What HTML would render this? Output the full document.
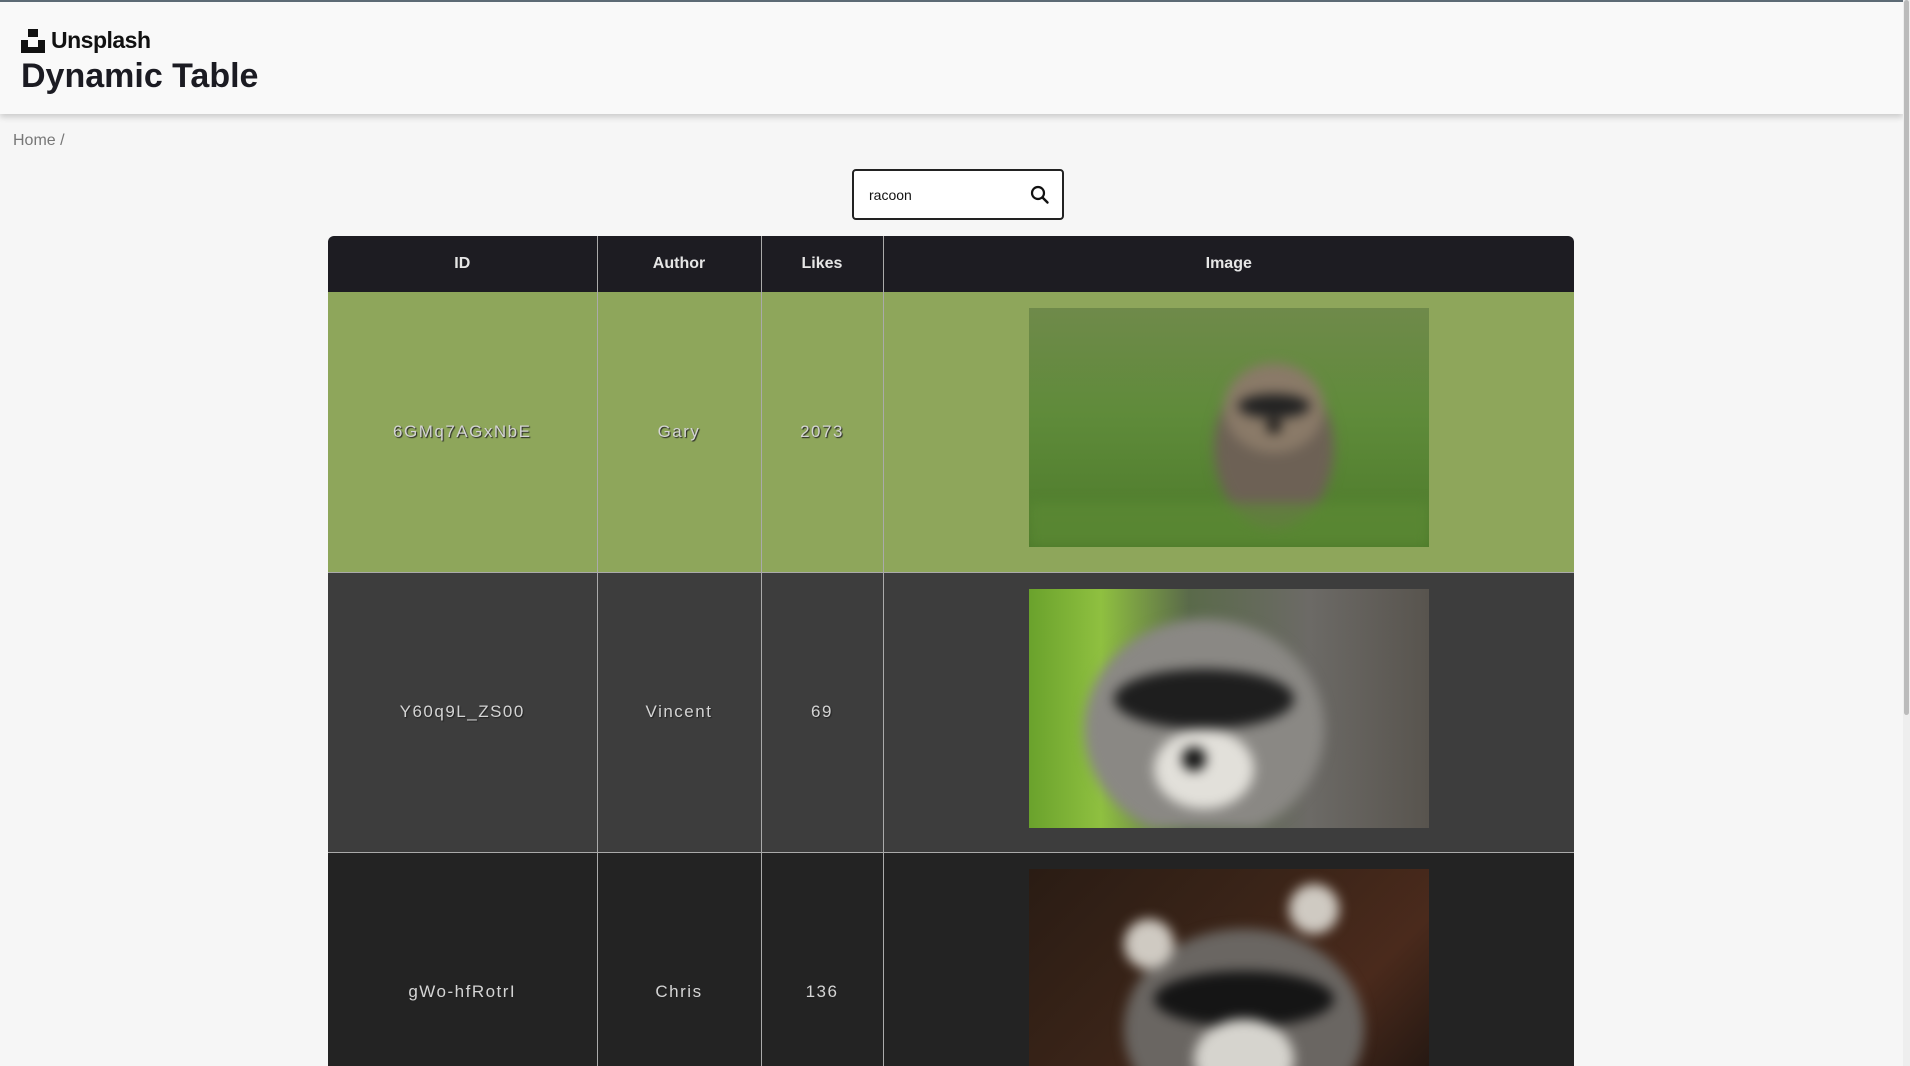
<!DOCTYPE html>
<html><head><meta charset="utf-8"><style>
*{box-sizing:border-box;margin:0;padding:0}
html,body{width:1910px;height:1066px;overflow:hidden}
body{background:#f6f6f6;font-family:"Liberation Sans",sans-serif;position:relative}
.top{position:absolute;left:0;top:0;width:1903px;height:114px;background:#f9f9f9;border-top:2px solid #5d6b75;box-shadow:0 3px 6px rgba(0,0,0,.18)}
.logo{position:absolute;left:21px;top:25px;display:flex;align-items:center}
.logo span{font-size:23px;font-weight:bold;color:#111;margin-left:6px;letter-spacing:-.5px}
h1{position:absolute;left:21px;top:55px;font-size:34px;font-weight:bold;color:#1b1b22}
.crumb{position:absolute;left:13px;top:132px;font-size:16px;color:#777}
.search{position:absolute;left:852px;top:169px;width:212px;height:51px;border:2px solid #222;border-radius:4px;background:#fff}
.search span{position:absolute;left:15px;top:16px;font-size:14px;color:#111}
.search svg{position:absolute;right:12px;top:14px}
table{position:absolute;left:328px;top:236px;width:1246px;border-collapse:collapse;border-radius:6px 6px 0 0;overflow:hidden}
th{background:#1d1c22;color:#e6e6e6;height:56px;font-size:16px;font-weight:bold;border-right:1px solid #aaa}
th:last-child,td:last-child{border-right:none}
td{height:280px;text-align:center;color:#d4d4d4;font-size:17px;letter-spacing:1.5px;text-shadow:1px 1px 1px #222;border-right:1px solid #aaa;border-bottom:1px solid #aaa}
td.i{vertical-align:top;padding-top:16px}
tr.g td{background:#8ea65b}
tr.d td{background:#3d3d3d}
tr.k td{background:#232323}
.img{width:400px;height:239px;margin:0 auto;position:relative;overflow:hidden}
.img svg{filter:blur(6px)}
.sb{position:absolute;right:0;top:0;width:7px;height:1066px;background:#eee}
.sb div{width:5px;margin-left:1px;height:715px;background:#bbb;border-radius:3px}
</style></head><body>
<div class="top">
<div class="logo"><svg width="24" height="24" viewBox="0 0 24 24"><path d="M7 0h10v8H7zM0 11h7v7h10v-7h7v13H0z" fill="#111"/></svg><span>Unsplash</span></div>
<h1>Dynamic Table</h1>
</div>
<div class="crumb">Home /</div>
<div class="search"><span>racoon</span><svg width="20" height="20" viewBox="0 0 20 20"><circle cx="8" cy="8" r="6" fill="none" stroke="#111" stroke-width="2.2"/><path d="M12.5 12.5l5 5" stroke="#111" stroke-width="2.4" stroke-linecap="round"/></svg></div>
<table>
<tr><th style="width:269px">ID</th><th style="width:164px">Author</th><th style="width:122px">Likes</th><th>Image</th></tr>
<tr class="g"><td>6GMq7AGxNbE</td><td>Gary</td><td>2073</td><td class="i"><div class="img" style="background:linear-gradient(180deg,#6f8a4a 0%,#5f8b3a 45%,#4c7a2a 100%)">
<svg width="400" height="239" style="position:absolute;left:0;top:0"><ellipse cx="245" cy="140" rx="60" ry="80" fill="#6d6155"/><ellipse cx="245" cy="100" rx="50" ry="45" fill="#8a7a68"/><ellipse cx="245" cy="98" rx="36" ry="12" fill="#222"/><circle cx="245" cy="118" r="7" fill="#111"/><rect x="0" y="195" width="400" height="50" fill="#5c8a35" opacity=".7"/></svg></div></td></tr>
<tr class="d"><td>Y60q9L_ZS00</td><td>Vincent</td><td>69</td><td class="i"><div class="img" style="background:linear-gradient(90deg,#6aa22c 0%,#8fc040 18%,#5a6a4a 40%,#6c6a66 70%,#58544e 100%)">
<svg width="400" height="239" style="position:absolute;left:0;top:0"><ellipse cx="175" cy="140" rx="120" ry="110" fill="#8a8884"/><ellipse cx="175" cy="110" rx="90" ry="30" fill="#1e1e1e"/><ellipse cx="175" cy="180" rx="50" ry="40" fill="#e2e0da"/><circle cx="165" cy="170" r="12" fill="#111"/></svg></div></td></tr>
<tr class="k"><td>gWo-hfRotrI</td><td>Chris</td><td>136</td><td class="i"><div class="img" style="background:linear-gradient(135deg,#2a1c14 0%,#3a2418 40%,#4a2a1c 70%,#1c1410 100%)">
<svg width="400" height="239" style="position:absolute;left:0;top:0"><ellipse cx="215" cy="160" rx="120" ry="100" fill="#6a6662"/><ellipse cx="215" cy="130" rx="90" ry="28" fill="#151515"/><ellipse cx="215" cy="190" rx="50" ry="40" fill="#d6d4ce"/><circle cx="120" cy="75" r="25" fill="#cfcac2"/><circle cx="285" cy="40" r="25" fill="#cfcac2"/></svg></div></td></tr>
</table>
<div class="sb"><div></div></div>
</body></html>
